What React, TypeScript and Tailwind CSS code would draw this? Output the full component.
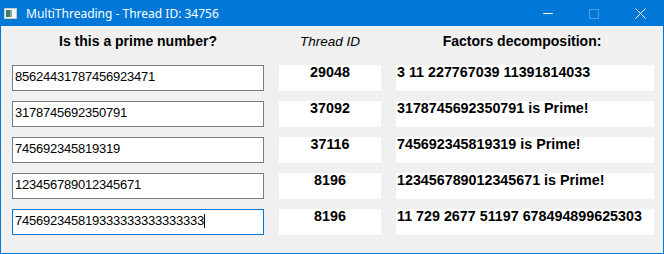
import React from "react";

const rows = [
  { input: "85624431787456923471", thread: "29048", factors: "3 11 227767039 11391814033" },
  { input: "3178745692350791", thread: "37092", factors: "3178745692350791 is Prime!" },
  { input: "745692345819319", thread: "37116", factors: "745692345819319 is Prime!" },
  { input: "123456789012345671", thread: "8196", factors: "123456789012345671 is Prime!" },
  { input: "745692345819333333333333333", thread: "8196", factors: "11 729 2677 51197 678494899625303" },
];

export default function App() {
  return (
    <div className="w-[664px] h-[254px] border border-[#0078d7] bg-[#f0f0f0] flex flex-col overflow-hidden">
      {/* Title bar */}
      <div className="h-[25px] bg-[#0078d7] flex items-center shrink-0">
        <div className="pl-[3px] pr-[9px] flex items-center">
          <svg width="13" height="11" viewBox="0 0 13 11">
            <rect x="0.5" y="0.5" width="12" height="10" fill="#f4f4f4" stroke="#c8c8c8" />
            <rect x="2" y="2" width="4" height="7" fill="#3f7a6a" />
            <rect x="6" y="2" width="2" height="7" fill="#7fb0a0" />
            <rect x="8" y="2" width="3" height="7" fill="#ffffff" />
          </svg>
        </div>
        <span
          className="text-white text-[12px] leading-[16px] flex-1"
          style={{ fontFamily: '"Noto Sans", "Segoe UI", sans-serif' }}
        >
          MultiThreading - Thread ID: 34756
        </span>
        <div className="w-[46px] h-full flex items-center justify-center">
          <div className="w-[10px] h-px bg-white" />
        </div>
        <div className="w-[46px] h-full flex items-center justify-center">
          <div className="w-[10px] h-[10px] border border-[#4c9fe3]" />
        </div>
        <div className="w-[46px] h-full flex items-center justify-center">
          <svg width="11" height="11" viewBox="0 0 11 11">
            <path d="M0.5 0.5 L10.5 10.5 M10.5 0.5 L0.5 10.5" stroke="#ffffff" strokeWidth="1" />
          </svg>
        </div>
      </div>

      {/* Content */}
      <div
        className="flex flex-col pl-[11px] pr-[8px]"
        style={{ fontFamily: '"Liberation Sans", Arial, sans-serif' }}
      >
        <div className="flex items-baseline gap-[15px] mt-[7px] h-[16px] leading-[16px] text-black">
          <div className="w-[252px] text-center font-bold text-[14px]">Is this a prime number?</div>
          <div className="w-[102px] text-center italic text-[13.5px]">Thread ID</div>
          <div className="w-[258px] text-center font-bold text-[14px] pr-[6px]">Factors decomposition:</div>
        </div>

        <div className="flex flex-col gap-[10px] mt-[16px]">
          {rows.map((r, i) => {
            const last = i === rows.length - 1;
            return (
              <div key={i} className="flex gap-[15px] h-[26px]">
                <div
                  className={
                    "w-[252px] h-[26px] bg-white border pl-[2px] pt-[3px] text-[13px] leading-[15px] tracking-[-0.23px] text-black whitespace-nowrap overflow-hidden " +
                    (last ? "border-[#0078d7]" : "border-[#7a7a7a]")
                  }
                >
                  {r.input}
                  {last && <span className="inline-block w-px h-[14px] bg-black align-[-3px]" />}
                </div>
                <div className="w-[102px] h-[26px] bg-white text-center font-bold text-[14.3px] leading-[15px] text-black">
                  {r.thread}
                </div>
                <div className="w-[258px] h-[26px] bg-white pl-[1px] font-bold text-[14.3px] leading-[15px] text-black whitespace-nowrap overflow-hidden">
                  {r.factors}
                </div>
              </div>
            );
          })}
        </div>
      </div>
    </div>
  );
}
